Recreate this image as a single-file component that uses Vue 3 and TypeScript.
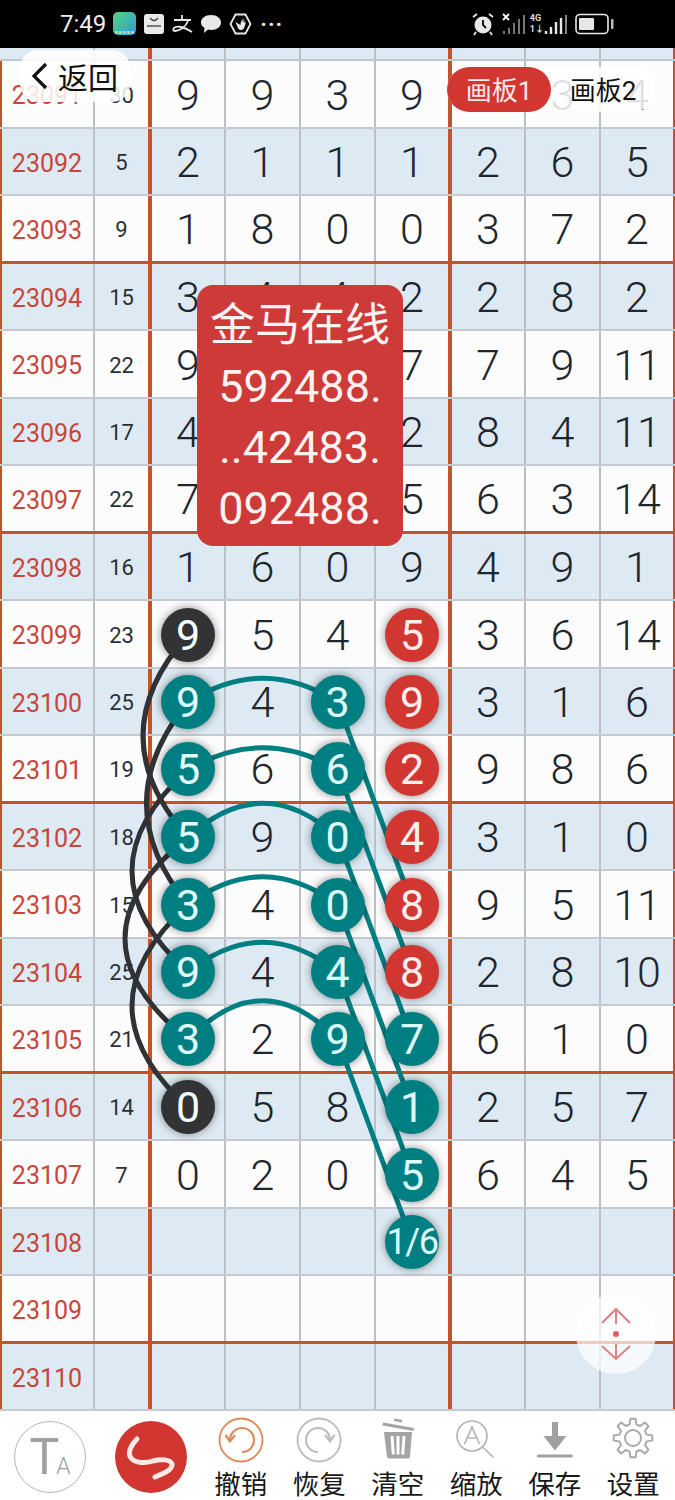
<script setup lang="ts">
type Tone = 'teal' | 'red' | 'dark'
interface Cell { v: string; tone?: Tone }

const t = (v: string): Cell => ({ v, tone: 'teal' })
const r = (v: string): Cell => ({ v, tone: 'red' })
const d = (v: string): Cell => ({ v, tone: 'dark' })
const n = (v: string): Cell => ({ v })

const rows: { id: string; sum: string; cells: Cell[] }[] = [
  { id: '23091', sum: '30', cells: [n('9'), n('9'), n('3'), n('9'), n('7'), n('3'), n('4')] },
  { id: '23092', sum: '5', cells: [n('2'), n('1'), n('1'), n('1'), n('2'), n('6'), n('5')] },
  { id: '23093', sum: '9', cells: [n('1'), n('8'), n('0'), n('0'), n('3'), n('7'), n('2')] },
  { id: '23094', sum: '15', cells: [n('3'), n('4'), n('4'), n('2'), n('2'), n('8'), n('2')] },
  { id: '23095', sum: '22', cells: [n('9'), n(''), n(''), n('7'), n('7'), n('9'), n('11')] },
  { id: '23096', sum: '17', cells: [n('4'), n(''), n(''), n('2'), n('8'), n('4'), n('11')] },
  { id: '23097', sum: '22', cells: [n('7'), n(''), n(''), n('5'), n('6'), n('3'), n('14')] },
  { id: '23098', sum: '16', cells: [n('1'), n('6'), n('0'), n('9'), n('4'), n('9'), n('1')] },
  { id: '23099', sum: '23', cells: [d('9'), n('5'), n('4'), r('5'), n('3'), n('6'), n('14')] },
  { id: '23100', sum: '25', cells: [t('9'), n('4'), t('3'), r('9'), n('3'), n('1'), n('6')] },
  { id: '23101', sum: '19', cells: [t('5'), n('6'), t('6'), r('2'), n('9'), n('8'), n('6')] },
  { id: '23102', sum: '18', cells: [t('5'), n('9'), t('0'), r('4'), n('3'), n('1'), n('0')] },
  { id: '23103', sum: '15', cells: [t('3'), n('4'), t('0'), r('8'), n('9'), n('5'), n('11')] },
  { id: '23104', sum: '25', cells: [t('9'), n('4'), t('4'), r('8'), n('2'), n('8'), n('10')] },
  { id: '23105', sum: '21', cells: [t('3'), n('2'), t('9'), t('7'), n('6'), n('1'), n('0')] },
  { id: '23106', sum: '14', cells: [d('0'), n('5'), n('8'), t('1'), n('2'), n('5'), n('7')] },
  { id: '23107', sum: '7', cells: [n('0'), n('2'), n('0'), t('5'), n('6'), n('4'), n('5')] },
  { id: '23108', sum: '', cells: [n(''), n(''), n(''), t('1/6'), n(''), n(''), n('')] },
  { id: '23109', sum: '', cells: [n(''), n(''), n(''), n(''), n(''), n(''), n('')] },
  { id: '23110', sum: '', cells: [n(''), n(''), n(''), n(''), n(''), n(''), n('')] },
]

const cy = (i: number): number => 13 + 67.5 * i + 33.75
const X1 = 188
const X3 = 337.5
const X4 = 412.5

const arcs: [number, number][] = [[9, 24], [10, 22], [11, 34], [12, 28], [13, 30], [14, 39]]
const arcPaths = arcs.map(([i, h]) => `M${X1} ${cy(i)} Q${(X1 + X3) / 2} ${cy(i) - 2 * h} ${X3} ${cy(i)}`)
const diagPaths = [9, 10, 11, 12, 13, 14].map(i => `M${X3} ${cy(i)} L${X4} ${cy(i + 3)}`)
const bends: [number, number][] = [[8, 98], [9, 105], [10, 76], [11, 62], [12, 76]]
const darkPaths = bends.map(([i, c]) => `M${X1} ${cy(i)} Q${c} ${(cy(i) + cy(i + 3)) / 2} ${X1} ${cy(i + 3)}`)

const thick = (i: number): boolean => (i + 1 - 3) % 4 === 0

const gearPath = ((): string => {
  const pts: string[] = []
  const teeth = 8
  const cx = 23
  const cyy = 21
  for (let k = 0; k < teeth; k++) {
    const a = (k / teeth) * Math.PI * 2 - Math.PI / 2
    const w = Math.PI / teeth
    const p = (rad: number, ang: number): string =>
      `${(cx + rad * Math.cos(ang)).toFixed(1)} ${(cyy + rad * Math.sin(ang)).toFixed(1)}`
    pts.push(p(14, a - w * 0.62), p(19.5, a - w * 0.34), p(19.5, a + w * 0.34), p(14, a + w * 0.62))
  }
  return `M${pts.join('L')}Z`
})()
</script>

<template>
  <div class="page">
    <header class="status">
      <span class="time">7:49</span>
      <svg class="si" width="24" height="24" viewBox="0 0 24 24">
        <defs>
          <linearGradient id="appg" x1="0" y1="0" x2="1" y2="1">
            <stop offset="0" stop-color="#5fd07a" />
            <stop offset="1" stop-color="#1f9fe0" />
          </linearGradient>
        </defs>
        <rect x="0" y="0" width="23" height="23" rx="5" fill="url(#appg)" />
        <path d="M2 20.500h19" stroke="#f3c27a" stroke-width="3" stroke-dasharray="3 1" />
      </svg>
      <svg class="si" width="20" height="20" viewBox="0 0 20 20">
        <rect width="20" height="20" rx="3" fill="#e9e9e9" />
        <path d="M6 4q4 5 8 0" fill="none" stroke="#444" stroke-width="1.400" />
        <rect x="3" y="11" width="14" height="2" fill="#777" />
      </svg>
      <svg class="si" width="22" height="20" viewBox="0 0 22 20" fill="none" stroke="#e8e8e8" stroke-width="1.800">
        <path d="M3 6h17M11 1v5M17 7q-4 9-13 10-3 0-1-3 2-2 7-1 5 1 11 5" />
      </svg>
      <svg class="si" width="22" height="20" viewBox="0 0 22 20">
        <path d="M11 1c6 0 10 3.400 10 7.500S17 16 11 16c-1 0-2-.1-3-.4L4 19l.5-5C2 12.600 1 10.600 1 8.500 1 4.400 5 1 11 1z" fill="#e8e8e8" />
      </svg>
      <svg class="si" width="23" height="22" viewBox="0 0 23 22">
        <path d="M6.500 1.500h10l5 9.500-5 9.500h-10l-5-9.500z" fill="none" stroke="#e8e8e8" stroke-width="1.800" />
        <path d="M6.500 9l2 5q1 3 3.500 3t3.500-3l1.500-5-1.500 1V6.500l-1 3V5l-1 4.500V4.500l-1 5V6l-1 5v1z" fill="#e8e8e8" />
      </svg>
      <span class="dots">···</span>
      <span class="grow"></span>
      <svg class="si" width="24" height="24" viewBox="0 0 24 24">
        <circle cx="12" cy="13" r="8.500" fill="#e8e8e8" />
        <path d="M12 8v5l3 3" stroke="#000" stroke-width="1.800" fill="none" />
        <path d="M2 5l4-3M22 5l-4-3M5 20l-2 3M19 20l2 3" stroke="#e8e8e8" stroke-width="1.800" />
      </svg>
      <svg class="si sig" width="24" height="24" viewBox="0 0 24 24">
        <path d="M1 2l6 6M7 2L1 8" stroke="#fff" stroke-width="1.800" />
        <path d="M2 19v3M7 16v6M12 11v11M17 7v15M22 3v19" stroke="#777" stroke-width="2" />
      </svg>
      <span class="net"><b>4G</b><b>1↓</b></span>
      <svg class="si sig2" width="24" height="24" viewBox="0 0 24 24">
        <path d="M2 19v3M7 15v7M12 10v12M17 6v16" stroke="#e8e8e8" stroke-width="2.400" />
        <path d="M22 3v19" stroke="#888" stroke-width="2" />
      </svg>
      <svg class="si batt" width="40" height="22" viewBox="0 0 40 22">
        <rect x="1" y="1.500" width="32" height="19" rx="4" fill="none" stroke="#e8e8e8" stroke-width="1.600" />
        <rect x="4" y="5" width="15" height="12" rx="1" fill="#e8e8e8" />
        <rect x="36" y="6" width="2.500" height="10" rx="1" fill="#bbb" />
      </svg>
    </header>

    <main class="board">
      <div class="stub">
        <span></span><span></span><span></span><span></span><span></span><span></span><span></span><span></span><span></span>
      </div>
      <div
        v-for="(row, i) in rows"
        :key="row.id"
        class="row"
        :class="{ tint: i % 2 === 1, heavy: thick(i) }"
      >
        <div class="id">{{ row.id }}</div>
        <div class="sum">{{ row.sum }}</div>
        <div v-for="(cell, j) in row.cells" :key="j" class="num" :class="{ split: j === 3 }">
          <span v-if="cell.tone" class="ball" :class="[cell.tone, { small: cell.v.length > 1 }]">{{ cell.v }}</span>
          <template v-else>{{ cell.v }}</template>
        </div>
      </div>

      <svg class="lines" width="675" height="1363" viewBox="0 0 675 1363" fill="none">
        <path v-for="p in darkPaths" :key="p" :d="p" stroke="#303235" stroke-width="5" />
        <path v-for="p in arcPaths" :key="p" :d="p" stroke="#007f83" stroke-width="5" />
        <path v-for="p in diagPaths" :key="p" :d="p" stroke="#007f83" stroke-width="5" />
      </svg>

      <div class="back">
        <svg width="20" height="30" viewBox="0 0 20 30" fill="none" stroke="#111" stroke-width="3.200"><path d="M16 3L4 15l12 12" /></svg>
        <span>返回</span>
      </div>

      <div class="tabs">
        <span class="tab on">画板1</span>
        <span class="tab">画板2</span>
      </div>

      <div class="pop">
        <div class="cn">金马在线</div>
        <div>592488.</div>
        <div>..42483.</div>
        <div>092488.</div>
      </div>

      <div class="scroll">
        <svg width="32" height="54" viewBox="0 0 32 54" fill="none" stroke="#df7f86" stroke-width="2">
          <path d="M2 16L16 2l14 14M16 3v14M2 39l14 13 14-13M16 37v14" />
          <circle cx="16" cy="27" r="3" fill="#df5f68" stroke="none" />
        </svg>
      </div>
    </main>

    <footer class="tools">
      <div class="round ta"><span class="bigT">T</span><span class="smallA">A</span></div>
      <div class="round pen">
        <svg width="72" height="72" viewBox="0 0 72 72" fill="none" stroke="#fbe9e6" stroke-width="5" stroke-linecap="round" stroke-linejoin="round">
          <path d="M22 18C16 24 12 32 16 37c5 6 16 5 22 3 8-2 17-2 19 3 1 5-7 9-17 13" />
        </svg>
      </div>
      <div class="tool undo">
        <svg width="46" height="46" viewBox="0 0 46 46" fill="none" stroke="#e08a58" stroke-width="1.800">
          <circle cx="23" cy="23" r="21.500" />
          <path d="M12 23a12 12 0 1 1 12 12" stroke-width="2.200" />
          <path d="M7.500 18L12 24.500 17 18" stroke-width="2.200" />
        </svg>
        <span>撤销</span>
      </div>
      <div class="tool">
        <svg width="46" height="46" viewBox="0 0 46 46" fill="none" stroke="#bdbdbd" stroke-width="1.800">
          <circle cx="23" cy="23" r="21.500" />
          <path d="M34 23a12 12 0 1 0-12 12" stroke-width="2.200" />
          <path d="M29 18l5 6.500 4.500-6.500" stroke-width="2.200" />
        </svg>
        <span>恢复</span>
      </div>
      <div class="tool">
        <svg width="46" height="46" viewBox="0 0 46 46" fill="#a4a4a4">
          <path d="M8 5.500L39 11l-.5 3L7.500 8.500zM19 4l8 1.500.4-2.500-8-1.500z" />
          <path d="M9 15h28l-2 24.500a2 2 0 0 1-2 2H14a2 2 0 0 1-2-2zM15.500 19l1.300 18.500h3L18.500 19zM21.500 19v18.500h3V19zM27.500 19l-1.300 18.500h3L30.500 19z" fill-rule="evenodd" />
        </svg>
        <span>清空</span>
      </div>
      <div class="tool">
        <svg width="46" height="46" viewBox="0 0 46 46" fill="none" stroke="#b4b4b4" stroke-width="1.700">
          <circle cx="19" cy="19" r="15" />
          <path d="M29.500 30l11 10.500M11.500 27l7.500-17 7.500 17M14 21h10" />
        </svg>
        <span>缩放</span>
      </div>
      <div class="tool">
        <svg width="46" height="46" viewBox="0 0 46 46" fill="#a0a0a0">
          <path d="M20 5h6v14h8.500L23 33.500 11.500 19H20z" />
          <rect x="5" y="37.500" width="36" height="3" rx="1.500" />
        </svg>
        <span>保存</span>
      </div>
      <div class="tool">
        <svg width="46" height="46" viewBox="0 0 46 46" fill="none" stroke="#a8a8a8" stroke-width="1.900" stroke-linejoin="round">
          <path :d="gearPath" />
          <circle cx="23" cy="21" r="8" />
        </svg>
        <span>设置</span>
      </div>
    </footer>
  </div>
</template>

<style>
html, body { margin: 0; background: #fff; }
</style>

<style scoped>
.page {
  width: 675px;
  height: 1500px;
  overflow: hidden;
  display: flex;
  flex-direction: column;
  font-family: Roboto, "Noto Sans CJK SC", sans-serif;
  color: #20262c;
}

.status {
  height: 48px;
  flex: none;
  background: #000;
  display: flex;
  align-items: center;
  padding: 0 60px 0 60px;
  box-sizing: border-box;
  gap: 7px;
}
.time { color: #eee; font-size: 24px; }
.si { flex: none; }
.dots { color: #e8e8e8; font-size: 22px; font-weight: 700; letter-spacing: 1px; margin-left: 1px; }
.grow { flex: 1; }
.net { display: flex; flex-direction: column; color: #ddd; font-size: 9px; line-height: 11px; margin-right: -7px; margin-left: -3px; }
.net b { font-weight: 700; }

.board { position: relative; height: 1363px; flex: none; }

.stub, .row {
  display: grid;
  grid-template-columns: 95px 57px 74px 75px 75px 76px 74px 75px 74px;
}
.stub {
  height: 13px;
  box-sizing: border-box;
  background: #deeaf3;
  border-bottom: 2px solid #bec8cf;
}
.stub span { border-right: 2px solid #bcc0c5; }
.stub span:nth-child(2), .stub span:nth-child(6) { border-right: 4px solid #c4532b; }
.stub span:nth-child(9) { border-right: 2px solid #c4532b; }

.row {
  height: 67.5px;
  box-sizing: border-box;
  background: #fcfcfc;
  border-bottom: 2px solid #c4cad0;
  box-shadow: inset 2px 0 0 #c4532b;
}
.row.tint { background: #deeaf3; }
.row.heavy { border-bottom: 3px solid #c4532b; }

.id, .sum, .num { display: flex; align-items: center; justify-content: center; box-sizing: border-box; }
.id { color: #c8453a; font-size: 25px; padding: 4px 0 0 1px; border-right: 2px solid #bcc0c5; }
.sum { font-size: 22px; border-right: 4px solid #c4532b; padding-top: 3px; color: #2a2f35; }
.num { font-size: 43px; font-weight: 300; padding-top: 2px; border-right: 2px solid #bcc0c5; }
.num:last-child { border-right: 2px solid #c4532b; }
.num.split { border-right: 4px solid #c4532b; }

.ball {
  position: relative;
  z-index: 2;
  width: 54px;
  height: 54px;
  border-radius: 50%;
  color: #f4ffff;
  font-weight: 400;
  display: flex;
  align-items: center;
  justify-content: center;
  box-shadow: 0 0 8px rgba(0, 0, 0, 0.45);
}
.ball.teal { background: #007f83; color: #dffcfc; }
.ball.red { background: #d13630; color: #fdeeee; }
.ball.dark { background: #323335; }
.ball.small { font-size: 36px; letter-spacing: -1.500px; }

.lines { position: absolute; left: 0; top: 0; z-index: 1; pointer-events: none; }

.back {
  position: absolute;
  z-index: 3;
  left: 20px;
  top: 2px;
  width: 110px;
  height: 52px;
  box-sizing: border-box;
  padding-left: 10px;
  border-radius: 18px;
  background: rgba(255, 255, 255, 0.85);
  display: flex;
  align-items: center;
  gap: 8px;
  font-size: 30px;
  color: #111;
}

.tabs {
  position: absolute;
  z-index: 3;
  left: 447px;
  top: 19px;
  width: 208px;
  height: 45px;
  border-radius: 23px;
  display: flex;
  background: rgba(255, 255, 255, 0.85);
  font-size: 26px;
}
.tab { flex: 1; display: flex; align-items: center; justify-content: center; border-radius: 23px; color: #111; padding-bottom: 2px; }
.tab.on { background: #d13630; color: #fbeaea; }

.pop {
  position: absolute;
  z-index: 3;
  left: 197px;
  top: 237px;
  width: 206px;
  height: 261px;
  box-sizing: border-box;
  padding-top: 11px;
  border-radius: 16px;
  background: #cd3a38;
  color: #fdf3f3;
  text-align: center;
  font-size: 45px;
  line-height: 61px;
}
.pop .cn { font-size: 45px; line-height: 60px; }

.scroll {
  position: absolute;
  z-index: 3;
  left: 576px;
  top: 1246px;
  width: 80px;
  height: 80px;
  border-radius: 50%;
  background: rgba(255, 255, 255, 0.7);
  display: flex;
  align-items: center;
  justify-content: center;
}

.tools {
  flex: 1;
  background: #fff;
  display: flex;
  align-items: flex-start;
  padding-left: 14px;
}
.round { width: 72px; height: 72px; border-radius: 50%; box-sizing: border-box; margin-top: 10px; flex: none; }
.ta { border: 1.500px solid #b5b5b5; display: flex; align-items: center; justify-content: center; color: #a0a0a0; }
.bigT { font-size: 50px; line-height: 50px; font-weight: 400; }
.smallA { font-size: 23px; line-height: 23px; font-weight: 300; margin-top: 18px; margin-left: -3px; }
.pen { background: #d13630; margin-left: 29px; margin-right: 14.500px; }
.tool { width: 78.500px; flex: none; display: flex; flex-direction: column; align-items: center; font-size: 26.500px; line-height: 30px; padding-top: 6px; color: #181818; }
.tool span { margin-top: 7px; }
</style>
